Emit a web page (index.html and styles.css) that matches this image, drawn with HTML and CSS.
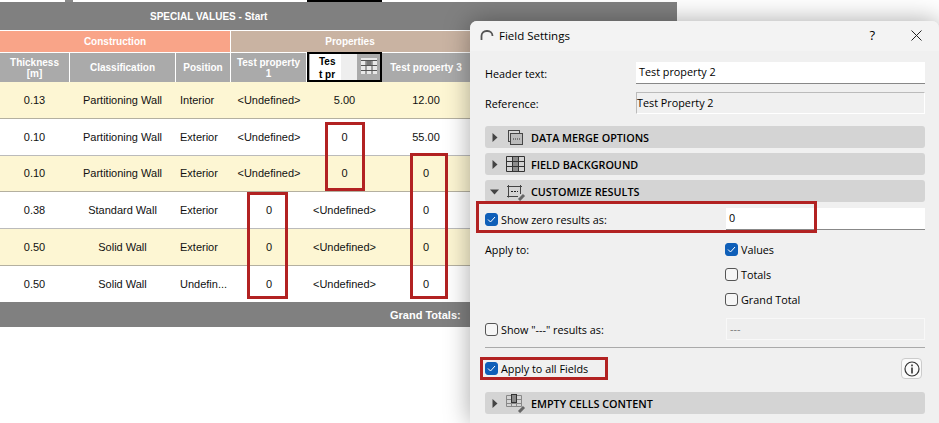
FILE: index.html
```html
<!DOCTYPE html>
<html lang="en">
<head>
<meta charset="utf-8">
<title>Field Settings</title>
<link rel="stylesheet" href="styles.css">
</head>
<body>
<div class="topstrip"><span class="tick"></span><span class="tickdark"></span></div>
<main class="schedule">
  <div class="title">SPECIAL VALUES - Start</div>
  <div class="row groups">
    <div class="construction">Construction</div>
    <div class="properties">Properties</div>
  </div>
  <div class="row heads">
    <div>Thickness<br>[m]</div>
    <div>Classification</div>
    <div>Position</div>
    <div>Test property<br>1</div>
    <div class="active-head">
      <span class="edit">Tes<br>t pr</span>
      <span class="edit-fill"></span>
      <svg class="gridicon" width="16" height="16" viewBox="0 0 16 16"><rect x="0" y="0" width="16" height="16" fill="#e8e8e8"/><path d="M0 2.500h16M0 7.500h16M0 12.500h16M5 2v14M11 2v14" stroke="#555" stroke-width="1"/><rect x="5.500" y="3" width="5" height="4" fill="#777"/></svg>
    </div>
    <div>Test property 3</div>
    <div></div>
  </div>
  <div class="row data odd"><div>0.13</div><div>Partitioning Wall</div><div class="left">Interior</div><div>&lt;Undefined&gt;</div><div>5.00</div><div>12.00</div><div></div></div>
  <div class="row data"><div>0.10</div><div>Partitioning Wall</div><div class="left">Exterior</div><div>&lt;Undefined&gt;</div><div>0</div><div>55.00</div><div></div></div>
  <div class="row data odd short"><div>0.10</div><div>Partitioning Wall</div><div class="left">Exterior</div><div>&lt;Undefined&gt;</div><div>0</div><div>0</div><div></div></div>
  <div class="row data"><div>0.38</div><div>Standard Wall</div><div class="left">Exterior</div><div>0</div><div>&lt;Undefined&gt;</div><div>0</div><div></div></div>
  <div class="row data odd"><div>0.50</div><div>Solid Wall</div><div class="left">Exterior</div><div>0</div><div>&lt;Undefined&gt;</div><div>0</div><div></div></div>
  <div class="row data last"><div>0.50</div><div>Solid Wall</div><div class="left">Undefin...</div><div>0</div><div>&lt;Undefined&gt;</div><div>0</div><div></div></div>
  <div class="totals"><span>Grand Totals:</span></div>
</main>

<span class="mark mark-a"></span>
<span class="mark mark-b"></span>
<span class="mark mark-c"></span>

<section class="dialog">
  <header class="dialog-title">
    <svg class="appicon" width="14" height="14" viewBox="0 0 14 14"><path d="M1.500 12V8a5 5 0 0 1 5-5h1a5 5 0 0 1 5 5" fill="none" stroke="#555" stroke-width="1.800"/></svg>
    <span class="dialog-name">Field Settings</span>
    <span class="help">?</span>
    <svg class="close" width="11" height="11" viewBox="0 0 11 11"><path d="M.5.5l10 10M10.500.5l-10 10" stroke="#222" stroke-width="1"/></svg>
  </header>
  <div class="dialog-body">
    <div class="field field-header"><label>Header text:</label><div class="input">Test property 2</div></div>
    <div class="field field-ref"><label>Reference:</label><div class="readonly">Test Property 2</div></div>

    <div class="section sec-first"><svg class="tri" width="6" height="9" viewBox="0 0 6 9"><path d="M.5 0l5 4.500-5 4.500z"/></svg>
      <svg class="secicon icon-merge" width="15" height="15" viewBox="0 0 15 15"><rect x=".5" y=".5" width="11" height="11" fill="none" stroke="#444"/><rect x="2.500" y="3.500" width="12" height="11" fill="#bbb" stroke="#444"/><path d="M5 9h7" stroke="#333" stroke-dasharray="1 1"/></svg>
      <span>DATA MERGE OPTIONS</span></div>
    <div class="section"><svg class="tri" width="6" height="9" viewBox="0 0 6 9"><path d="M.5 0l5 4.500-5 4.500z"/></svg>
      <svg class="secicon" width="19" height="16" viewBox="0 0 19 16"><rect x="6.500" y=".5" width="6" height="15" fill="#8c8c8c"/><path d="M.5.5h18v15H.5zM.5 5.500h18M.5 10.500h18M6.500.5v15M12.500.5v15" fill="none" stroke="#333"/></svg>
      <span>FIELD BACKGROUND</span></div>
    <div class="section"><svg class="tri tri-open" width="9" height="6" viewBox="0 0 9 6"><path d="M0 .5h9l-4.500 5z"/></svg>
      <svg class="secicon" width="20" height="18" viewBox="0 0 20 18"><path d="M1 3.500h15M2.500 2v12.500M14.500 2v9M1 13.500h11" fill="none" stroke="#444"/><path d="M5 8.500h7" stroke="#222" stroke-dasharray="2 1"/><path d="M13 17l5-5" stroke="#666" stroke-width="3"/></svg>
      <span>CUSTOMIZE RESULTS</span></div>

    <div class="zero-row">
      <label class="check"><span class="box on"><svg width="9" height="7" viewBox="0 0 9 7"><path d="M1 3.500l2.500 2.500L8 1" fill="none" stroke="#fff" stroke-width="1"/></svg></span>Show zero results as:</label>
      <div class="input wide">0</div>
    </div>

    <div class="apply">
      <div class="apply-label">Apply to:</div>
      <div class="apply-list">
        <label class="check"><span class="box on"><svg width="9" height="7" viewBox="0 0 9 7"><path d="M1 3.500l2.500 2.500L8 1" fill="none" stroke="#fff" stroke-width="1"/></svg></span>Values</label>
        <label class="check"><span class="box"></span>Totals</label>
        <label class="check"><span class="box"></span>Grand Total</label>
      </div>
    </div>

    <div class="dash-row">
      <label class="check"><span class="box"></span>Show "---" results as:</label>
      <div class="dash-input">---</div>
    </div>
    <hr class="rule">
    <div class="all-row">
      <label class="check"><span class="box on"><svg width="9" height="7" viewBox="0 0 9 7"><path d="M1 3.500l2.500 2.500L8 1" fill="none" stroke="#fff" stroke-width="1"/></svg></span>Apply to all Fields</label>
      <span class="info"><svg width="16" height="16" viewBox="0 0 16 16"><circle cx="8" cy="8" r="7" fill="none" stroke="#333" stroke-width="1.200"/><rect x="7.200" y="3.500" width="1.600" height="1.800" fill="#333"/><rect x="7.200" y="6.500" width="1.600" height="6" fill="#333"/></svg></span>
    </div>
    <div class="section sec-last"><svg class="tri" width="6" height="9" viewBox="0 0 6 9"><path d="M.5 0l5 4.500-5 4.500z"/></svg>
      <svg class="secicon icon-empty" width="20" height="19" viewBox="0 0 20 19"><path d="M.5 1.500h15v11H.5zM.5 5.500h15M.5 9.500h15M5.500 1.500v11M10.500 1.500v11" fill="none" stroke="#888"/><rect x="5.500" y=".5" width="5" height="8" fill="#888" stroke="#333"/><path d="M13 18l5-5" stroke="#666" stroke-width="3"/></svg>
      <span>EMPTY CELLS CONTENT</span></div>
  </div>
</section>

<span class="mark mark-d"></span>
<span class="mark mark-e"></span>
</body>
</html>
```
FILE: styles.css
```css
* { box-sizing: border-box; }
html, body { margin: 0; padding: 0; height: 423px; overflow: hidden; background: #fff; }
body { position: relative; font-family: "Liberation Sans", Arial, sans-serif; color: #111; }

.topstrip { height: 2px; position: relative; }
.tick { position: absolute; left: 65px; top: 0; width: 8px; height: 2px; background: #888; }
.tickdark { position: absolute; left: 307px; top: 0; width: 75px; height: 2px; background: #000; }

.schedule { width: 677px; }
.title { height: 28px; background: #808080; color: #fff; font-size: 10px; font-weight: bold; display: flex; align-items: center; padding-left: 150px; }
.row { display: grid; grid-template-columns: 70px 106px 55px 76px 75px 88px 207px; }
.groups { margin-top: 1px; height: 21px; grid-template-columns: 230px 446px; gap: 1px; font-size: 10px; font-weight: bold; color: #fff; text-align: center; line-height: 21px; }
.construction { background: #f9a488; }
.properties { background: #c9b3a2; padding-right: 208px; }
.heads { margin-top: 1px; height: 29px; font-size: 10px; font-weight: bold; color: #fff; line-height: 11px; }
.heads > div { background: #aaa; display: flex; align-items: center; justify-content: center; text-align: center; }
.heads > div:nth-child(-n+4) { border-right: 1px solid #fff; }
.heads > .active-head { position: relative; z-index: 1; background: #aaa; border: 2px solid #000; margin-top: -1px; height: 30px; justify-content: flex-start; color: #000; padding: 0 0 0 1px; }
.edit { width: 31px; height: 100%; background: #fff; font-size: 10px; line-height: 13px; display: block; padding: 1px 0 0 9px; text-align: left; }
.edit-fill { width: 16px; height: 100%; background: #eee; }
.gridicon { margin-left: 4px; margin-bottom: 3px; }

.data { height: 37px; font-size: 11px; color: #111; background: #fff; }
.data > div { display: flex; align-items: center; justify-content: center; padding-bottom: 1px; white-space: nowrap; }
.data > div:nth-child(-n+2) { padding-right: 1px; }
.data > .left { justify-content: flex-start; padding-left: 4px; }
.odd { background: #fdf6d3; border-bottom: 1px solid #b4b0a0; }
.data:not(.odd) { border-bottom: 1px solid #bbb; }
.data.short { height: 36px; }
.data.last { border-bottom: 0; height: 36px; }
.totals { height: 25px; background: #808080; color: #fff; font-size: 11px; font-weight: bold; display: flex; align-items: center; padding-left: 390px; }

.mark { position: absolute; border: 3px solid #b22222; display: block; }
.mark-a { left: 325px; top: 122px; width: 40px; height: 69px; }
.mark-b { left: 247px; top: 192px; width: 41px; height: 107px; }
.mark-c { left: 410px; top: 153px; width: 38px; height: 146px; }
.mark-d { left: 476px; top: 201px; width: 341px; height: 32px; }
.mark-e { left: 480px; top: 357px; width: 128px; height: 23px; }

.dialog { position: absolute; left: 470px; top: 21px; width: 469px; height: 402px; background: #f0f0f0; border-radius: 7px 7px 0 0; box-shadow: 0 0 26px rgba(0,0,0,.35); font-family: "Open Sans", "Noto Sans", sans-serif; font-size: 10.800px; color: #000; }
.dialog-title { height: 30px; background: #f3f3f3; border-radius: 7px 7px 0 0; display: flex; align-items: center; padding: 0 17px 2px 10px; font-size: 11.500px; }
.appicon { margin-right: 5px; }
.dialog-name { flex: 1; }
.help { font-size: 13px; margin-right: 36px; }
.dialog-body { padding: 11px 14px 0 15px; }
.field { display: flex; align-items: center; height: 22px; }
.field label { width: 151px; }
.field-ref { margin-top: 8px; }
.input { flex: 1; height: 22px; background: #fff; border-bottom: 1px solid #888; padding-left: 3px; line-height: 20px; }
.readonly { flex: 1; height: 22px; background: #f0f0f0; border: 1px solid #bbb; border-bottom-color: #fff; border-right-color: #fff; line-height: 20px; }

.section { height: 22px; margin-top: 5px; background: #d4d4d4; border-radius: 3px; display: flex; align-items: center; font-weight: 600; font-size: 10.800px; position: relative; padding-left: 46px; }
.section.sec-first { margin-top: 12px; }
.tri { position: absolute; left: 7px; top: 7px; fill: #444; }
.tri-open { left: 5px; top: 9px; }
.secicon { position: absolute; left: 21px; top: 3px; }
.icon-merge { left: 23px; top: 4px; }
.icon-empty { top: 2px; }

.check { display: flex; align-items: center; gap: 3px; }
.box { width: 13px; height: 13px; border: 1px solid #555; border-radius: 3px; background: #f6f6f6; display: flex; align-items: center; justify-content: center; flex: none; }
.box.on { background: #0f5fb8; border-color: #0f5fb8; }

.zero-row { display: flex; align-items: center; height: 22px; margin-top: 6px; }
.zero-row .check { width: 241px; }
.input.wide { height: 22px; padding-left: 3px; }

.apply { display: flex; margin-top: 13px; }
.apply-label { width: 240px; line-height: 13px; }
.apply-list { display: flex; flex-direction: column; gap: 12px; }
.apply-list .check { height: 13px; }

.dash-row { display: flex; align-items: center; height: 22px; margin-top: 12px; }
.dash-row .check { width: 241px; }
.dash-input { flex: 1; height: 22px; background: #eee; border: 1px solid #f8f8f8; padding-left: 3px; line-height: 20px; color: #777; }

.rule { border: 0; border-top: 1px solid #aaa; margin: 7px 0 0; }
.all-row { display: flex; align-items: center; justify-content: space-between; height: 21px; margin-top: 10px; padding-right: 3px; }
.info { width: 21px; height: 21px; background: #fafafa; border: 1px solid #ccc; border-radius: 4px; display: flex; align-items: center; justify-content: center; }
.section.sec-last { margin-top: 13px; }
```
